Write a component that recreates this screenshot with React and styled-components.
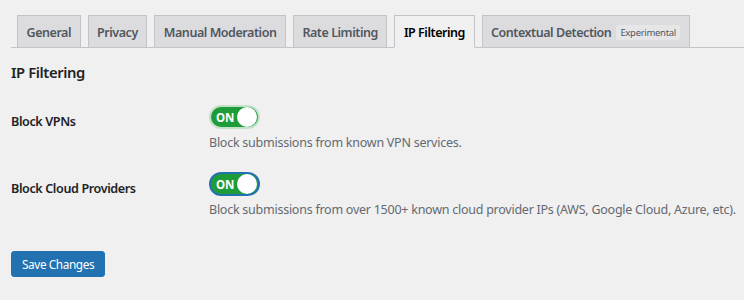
import React, { useState } from 'react';
import styled, { createGlobalStyle } from 'styled-components';

const GlobalStyle = createGlobalStyle`
  html, body {
    margin: 0;
    padding: 0;
    background: #f0f0f1;
  }
  body {
    font-family: "Noto Sans", "Open Sans", sans-serif;
    color: #1d2327;
  }
`;

const Page = styled.div`
  width: 744px;
  height: 300px;
  box-sizing: border-box;
  padding: 15px 0 0 11px;
  background: #f0f0f1;
  overflow: hidden;
`;

const TabBar = styled.nav`
  display: flex;
  align-items: flex-end;
  gap: 7px;
  padding-left: 6px;
  border-bottom: 1px solid #c3c4c7;
  height: 32px;
`;

const Tab = styled.a`
  display: flex;
  align-items: center;
  gap: 5px;
  box-sizing: border-box;
  height: 33px;
  margin-bottom: -1px;
  padding: 1px 8.5px 0;
  border: 1px solid #c3c4c7;
  border-bottom-color: ${(p) => (p.$active ? '#f0f0f1' : '#c3c4c7')};
  background: ${(p) => (p.$active ? '#f0f0f1' : '#dcdcde')};
  color: ${(p) => (p.$active ? '#000' : '#50575e')};
  font-size: 12.5px;
  font-weight: 600;
  letter-spacing: -0.45px;
  text-decoration: none;
  white-space: nowrap;
`;

const Badge = styled.span`
  display: inline-block;
  padding: 1px 4px;
  background: #e6e6e8;
  border-radius: 2px;
  color: #50575e;
  font-size: 9.5px;
  font-weight: 400;
  line-height: 13px;
  letter-spacing: -0.3px;
`;

const Heading = styled.h2`
  margin: 13px 0 0;
  font-size: 14.8px;
  font-weight: 600;
  line-height: 22px;
  letter-spacing: -0.4px;
  color: #1d2327;
`;

const Form = styled.div`
  display: flex;
  flex-direction: column;
  gap: 19px;
  margin-top: 22px;
`;

const Row = styled.div`
  display: grid;
  grid-template-columns: 198px 1fr;
  align-items: start;
`;

const Label = styled.label`
  padding-top: 7px;
  font-size: 12.6px;
  font-weight: 600;
  line-height: 20px;
  letter-spacing: -0.4px;
  color: #1d2327;
`;

const Field = styled.div`
  display: flex;
  flex-direction: column;
  align-items: flex-start;
  gap: 4px;
`;

const Switch = styled.button`
  position: relative;
  display: flex;
  align-items: center;
  box-sizing: border-box;
  width: 51px;
  height: 24px;
  padding: 0 0 0 5px;
  border: 2px solid ${(p) => (p.$focused ? '#2271b1' : '#c3e0c9')};
  border-radius: 12px;
  background: ${(p) => (p.$on ? '#1f9c3a' : '#a7aaad')};
  color: #fff;
  font-family: inherit;
  font-size: 11.5px;
  font-weight: 700;
  letter-spacing: -0.2px;
  cursor: pointer;
`;

const Knob = styled.span`
  position: absolute;
  top: 50%;
  right: 1px;
  width: 20px;
  height: 20px;
  border-radius: 50%;
  background: #fff;
  transform: translateY(-50%);
`;

const Description = styled.p`
  margin: 0;
  font-size: 12.5px;
  line-height: 20px;
  letter-spacing: -0.25px;
  color: #646970;
`;

const SaveButton = styled.button`
  margin-top: 31px;
  box-sizing: border-box;
  height: 26px;
  padding: 0 10px;
  border: 1px solid #2271b1;
  border-radius: 3px;
  background: #2271b1;
  color: #fff;
  font-family: inherit;
  font-size: 11.8px;
  letter-spacing: -0.4px;
  cursor: pointer;
`;

const tabs = ['General', 'Privacy', 'Manual Moderation', 'Rate Limiting', 'IP Filtering'];

const settings = [
  { id: 'vpn', label: 'Block VPNs', text: 'Block submissions from known VPN services.' },
  {
    id: 'cloud',
    label: 'Block Cloud Providers',
    text: 'Block submissions from over 1500+ known cloud provider IPs (AWS, Google Cloud, Azure, etc).',
    focused: true,
  },
];

const App = () => {
  const [values, setValues] = useState({ vpn: true, cloud: true });

  return (
    <Page>
      <GlobalStyle />
      <TabBar>
        {tabs.map((t) => (
          <Tab key={t} $active={t === 'IP Filtering'}>
            {t}
          </Tab>
        ))}
        <Tab>
          Contextual Detection <Badge>Experimental</Badge>
        </Tab>
      </TabBar>
      <Heading>IP Filtering</Heading>
      <Form>
        {settings.map((s) => (
          <Row key={s.id}>
            <Label>{s.label}</Label>
            <Field>
              <Switch
                $on={values[s.id]}
                $focused={s.focused}
                onClick={() => setValues({ ...values, [s.id]: !values[s.id] })}
              >
                {values[s.id] ? 'ON' : 'OFF'}
                <Knob />
              </Switch>
              <Description>{s.text}</Description>
            </Field>
          </Row>
        ))}
      </Form>
      <SaveButton>Save Changes</SaveButton>
    </Page>
  );
};

export default App;
